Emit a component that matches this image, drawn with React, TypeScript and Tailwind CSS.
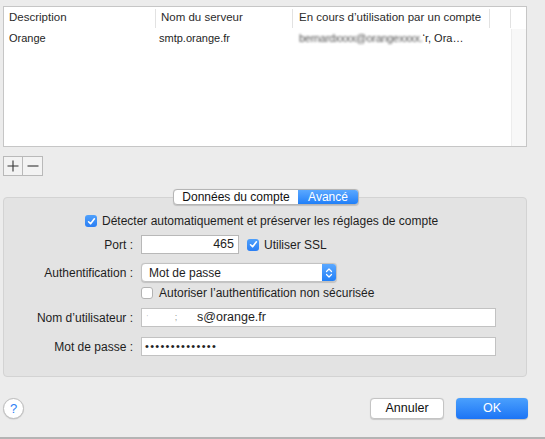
import React from 'react';

const Check: React.FC<{ checked?: boolean }> = ({ checked }) =>
  checked ? (
    <span className="w-[12px] h-[12px] rounded-[3px] bg-gradient-to-b from-[#4fa0fb] to-[#2a7ef4] flex items-center justify-center shrink-0">
      <svg width="9" height="9" viewBox="0 0 9 9">
        <path d="M1.6 4.8 L3.6 6.8 L7.4 1.8" fill="none" stroke="#fff" strokeWidth="1.6" strokeLinecap="round" strokeLinejoin="round" />
      </svg>
    </span>
  ) : (
    <span className="w-[12px] h-[12px] rounded-[3px] bg-white border border-[#b3b3b3] shrink-0" />
  );

const App: React.FC = () => {
  return (
    <div className="w-[545px] h-[439px] bg-[#ececec] border-b-2 border-[#b4b4b4] flex flex-col font-['Liberation_Sans',Arial,sans-serif] text-[#1e1e1e] overflow-hidden">
      {/* Server list */}
      <div className="ml-[3px] mt-[6px] w-[524px] h-[141px] bg-white border border-[#c6c6c6] flex flex-col">
        <div className="h-[22px] flex items-center text-[11.5px] text-[#2b2b2b] shrink-0">
          <div className="w-[152px] pl-[5px] h-[19px] flex items-center border-r border-[#e2e2e2]">Description</div>
          <div className="w-[137px] pl-[5px] h-[19px] flex items-center border-r border-[#e2e2e2]">Nom du serveur</div>
          <div className="w-[197px] pl-[6px] h-[19px] flex items-center border-r border-[#e2e2e2] whitespace-nowrap overflow-hidden">En cours d’utilisation par un compte</div>
          <div className="w-[21px] h-[19px] border-r border-[#e2e2e2]" />
        </div>
        <div className="flex flex-1">
          <div className="flex-1">
            <div className="h-[19px] flex items-center text-[11px] text-[#1e1e1e]">
              <div className="w-[152px] pl-[5px]">Orange</div>
              <div className="w-[137px] pl-[3px]">smtp.orange.fr</div>
              <div className="w-[197px] pl-[6px] flex items-center whitespace-nowrap overflow-hidden">
                <span className="text-[#555] blur-[1.1px] tracking-[-0.3px]">bernardxxxx@orangexxxx.</span>
                <span>‘r, Ora…</span>
              </div>
            </div>
          </div>
          <div className="w-[15px] bg-[#f8f8f8] border-l border-[#ededed]" />
        </div>
      </div>

      {/* + / - */}
      <div className="ml-[3px] mt-[9px] flex">
        <button className="w-[20px] h-[20px] border border-[#b9b9b9] bg-[#f3f3f3] flex items-center justify-center">
          <svg width="12" height="12" viewBox="0 0 12 12">
            <path d="M6 0.5 V11.5 M0.5 6 H11.5" stroke="#333" strokeWidth="1.1" />
          </svg>
        </button>
        <button className="w-[20px] h-[20px] border border-l-0 border-[#b9b9b9] bg-[#f3f3f3] flex items-center justify-center">
          <svg width="12" height="12" viewBox="0 0 12 12">
            <path d="M0.5 6 H11.5" stroke="#333" strokeWidth="1.1" />
          </svg>
        </button>
      </div>

      {/* Tabs */}
      <div className="mt-[13px] flex flex-col">
        <div className="relative z-10 ml-[173px] self-start flex h-[16px] rounded-[4px] border border-[#b5b5b5] bg-white text-[12px] overflow-hidden shadow-[0_0.5px_1px_rgba(0,0,0,0.15)]">
          <div className="w-[124px] flex items-center justify-center text-[#111]">Données du compte</div>
          <div className="w-[60px] flex items-center justify-center text-white bg-gradient-to-b from-[#5aa8ff] to-[#1f7ff8]">Avancé</div>
        </div>
        <div className="mx-[3px] -mt-[8px] w-[524px] h-[180px] rounded-[4px] bg-[#e3e3e3] border border-[#d3d3d3] flex flex-col text-[12px]">
          <div className="mt-[14px] pl-[81px] h-[18px] flex items-center gap-[5px]">
            <Check checked />
            <span>Détecter automatiquement et préserver les réglages de compte</span>
          </div>

          <div className="mt-[5px] flex items-center h-[19px]">
            <div className="w-[129px] text-right">Port :</div>
            <div className="ml-[8px] w-[98px] h-[19px] bg-white border border-[#b8b8b8] flex items-center justify-end pr-[4px] text-[12.5px]">465</div>
            <div className="ml-[8px] flex items-center gap-[5px]">
              <Check checked />
              <span>Utiliser SSL</span>
            </div>
          </div>

          <div className="mt-[9px] flex items-center h-[19px]">
            <div className="w-[129px] text-right">Authentification :</div>
            <div className="ml-[8px] w-[196px] h-[19px] bg-white border border-[#c2c2c2] rounded-[4px] flex items-center overflow-hidden shadow-[0_0.5px_1px_rgba(0,0,0,0.15)]">
              <span className="flex-1 pl-[7px]">Mot de passe</span>
              <span className="w-[14px] h-full bg-gradient-to-b from-[#5aa8ff] to-[#1f7ff8] flex items-center justify-center">
                <svg width="8" height="12" viewBox="0 0 8 12">
                  <path d="M1.5 4.5 L4 2 L6.5 4.5 M1.5 7.5 L4 10 L6.5 7.5" fill="none" stroke="#fff" strokeWidth="1.2" strokeLinecap="round" strokeLinejoin="round" />
                </svg>
              </span>
            </div>
          </div>

          <div className="mt-[4px] pl-[137px] h-[14px] flex items-center gap-[6px]">
            <Check />
            <span>Autoriser l’authentification non sécurisée</span>
          </div>

          <div className="mt-[8px] flex items-center h-[19px]">
            <div className="w-[129px] text-right">Nom d’utilisateur :</div>
            <div className="ml-[8px] w-[355px] h-[19px] bg-white border border-[#c2c2c2] flex items-center pl-[4px] text-[12.5px]">
              <span className="w-[51px] flex items-center gap-[6px] text-[#999]">
                <span className="text-[8px]">ˈ</span>
                <span className="ml-[20px] text-[9px]">;</span>
              </span>
              <span>s@orange.fr</span>
            </div>
          </div>

          <div className="mt-[10px] flex items-center h-[19px]">
            <div className="w-[129px] text-right">Mot de passe :</div>
            <div className="ml-[8px] w-[355px] h-[19px] bg-white border border-[#c2c2c2] flex items-center pl-[3px] text-[11px] tracking-[1.3px] text-[#222]">
              ••••••••••••••
            </div>
          </div>
        </div>
      </div>

      {/* Bottom buttons */}
      <div className="mt-[21px] flex items-center">
        <button className="ml-[3px] w-[21px] h-[21px] rounded-full bg-white border border-[#bdbdbd] shadow-[0_0.5px_1px_rgba(0,0,0,0.15)] flex items-center justify-center text-[13px] text-[#2f7ff5]">
          ?
        </button>
        <div className="flex-1" />
        <button className="w-[74px] h-[21px] rounded-[4px] bg-white border border-[#c4c4c4] shadow-[0_0.5px_1px_rgba(0,0,0,0.15)] text-[12.5px] text-[#111] flex items-center justify-center">
          Annuler
        </button>
        <button className="ml-[12px] mr-[17px] w-[72px] h-[21px] rounded-[4px] bg-gradient-to-b from-[#4aa0fd] to-[#1c74f5] text-[12.5px] text-white flex items-center justify-center shadow-[0_0.5px_1px_rgba(0,0,0,0.2)]">
          OK
        </button>
      </div>
    </div>
  );
};

export default App;
